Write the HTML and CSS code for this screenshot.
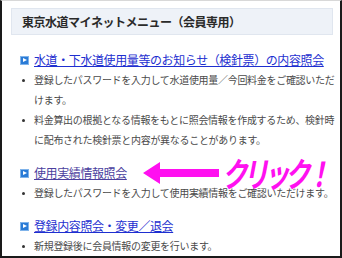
FILE: index.html
```html
<!DOCTYPE html>
<html lang="ja">
<head>
    <meta charset="UTF-8">
    <title>東京水道マイネットメニュー</title>
    <link rel="stylesheet" href="styles.css">
</head>
<body>
    <div class="frame">
        <div class="menu-header">東京水道マイネットメニュー（会員専用）</div>

        <div class="menu-list">
            <div class="menu-item">
                <a class="item-title" href="#"><span class="item-icon"></span><span class="item-link">水道・下水道使用量等のお知らせ（検針票）の内容照会</span></a>
                <ul class="item-notes">
                    <li>登録したパスワードを入力して水道使用量／今回料金をご確認いただけます。</li>
                    <li>料金算出の根拠となる情報をもとに照会情報を作成するため、検針時に配布された検針票と内容が異なることがあります。</li>
                </ul>
            </div>

            <div class="menu-item">
                <a class="item-title visited" href="#"><span class="item-icon"></span><span class="item-link">使用実績情報照会</span></a>
                <ul class="item-notes">
                    <li>登録したパスワードを入力して使用実績情報をご確認いただけます。</li>
                </ul>
            </div>

            <div class="menu-item">
                <a class="item-title" href="#"><span class="item-icon"></span><span class="item-link">登録内容照会・変更／退会</span></a>
                <ul class="item-notes">
                    <li>新規登録後に会員情報の変更を行います。</li>
                </ul>
            </div>
        </div>

        <!-- annotation drawn over the page -->
        <svg class="click-arrow" width="76" height="22" viewBox="0 0 76 22">
            <polygon points="0,11 17,0 17,7 76,7 76,15 17,15 17,22" fill="#ff10f0"/>
        </svg>
        <span class="click-note">クリック！</span>
    </div>
</body>
</html>
```

FILE: styles.css
```css
html, body {
    margin: 0;
    padding: 0;
    background: #ffffff;
}

body {
    font-family: "Noto Sans CJK JP", "Noto Sans", sans-serif;
    width: 342px;
    height: 258px;
    overflow: hidden;
}

.frame {
    position: relative;
    box-sizing: border-box;
    width: 342px;
    height: 258px;
    overflow: hidden;
    border-top: 1px solid #d8d8d8;
    border-left: 2px solid #1a1a1a;
    border-right: 2px solid #1a1a1a;
    border-bottom: 2px solid #1a1a1a;
    padding: 7px 8px 0 9px;
}

.menu-header {
    box-sizing: border-box;
    height: 27px;
    width: 322px;
    background-color: #eef2f8;
    border: 1px solid #e0e6ef;
    padding-left: 10px;
    font-size: 12px;
    font-weight: bold;
    letter-spacing: -0.5px;
    line-height: 25px;
    color: #2a2a2a;
}

.menu-list {
    padding-left: 9px;
    margin-top: 15px;
}

.menu-item + .menu-item {
    margin-top: 13px;
}

.item-title {
    display: flex;
    align-items: center;
    gap: 5px;
    line-height: 20px;
    font-size: 12px;
    color: #1e2fd0;
    text-decoration: none;
}

.item-title .item-link {
    text-decoration: underline;
    letter-spacing: -0.4px;
}

.item-title.visited {
    color: #4b3f9e;
}

.item-icon {
    box-sizing: border-box;
    width: 9px;
    height: 9px;
    background-color: #2a7bd6;
    border: 1px solid #7fb3ea;
    position: relative;
    flex-shrink: 0;
}

.item-icon::after {
    content: "";
    position: absolute;
    left: 2px;
    top: 1px;
    border-left: 4px solid #ffffff;
    border-top: 2.5px solid transparent;
    border-bottom: 2.5px solid transparent;
}

.item-notes {
    list-style: none;
    margin: 0 -6px 0 0;
    padding: 0 0 0 14px;
    font-size: 10px;
    letter-spacing: -0.3px;
    line-height: 20px;
    color: #4a4a4a;
}

.item-notes li {
    position: relative;
}

.item-notes li::before {
    content: "";
    position: absolute;
    left: -12px;
    top: 9px;
    width: 3px;
    height: 3px;
    border-radius: 50%;
    background-color: #333333;
}

.click-arrow {
    position: absolute;
    left: 141px;
    top: 161px;
}

.click-note {
    position: absolute;
    left: 220px;
    top: 149px;
    font-size: 34px;
    font-weight: bold;
    font-style: italic;
    letter-spacing: -6px;
    color: #ff10f0;
    line-height: 46px;
    transform: scaleX(0.75);
    transform-origin: left center;
    white-space: nowrap;
}
```
